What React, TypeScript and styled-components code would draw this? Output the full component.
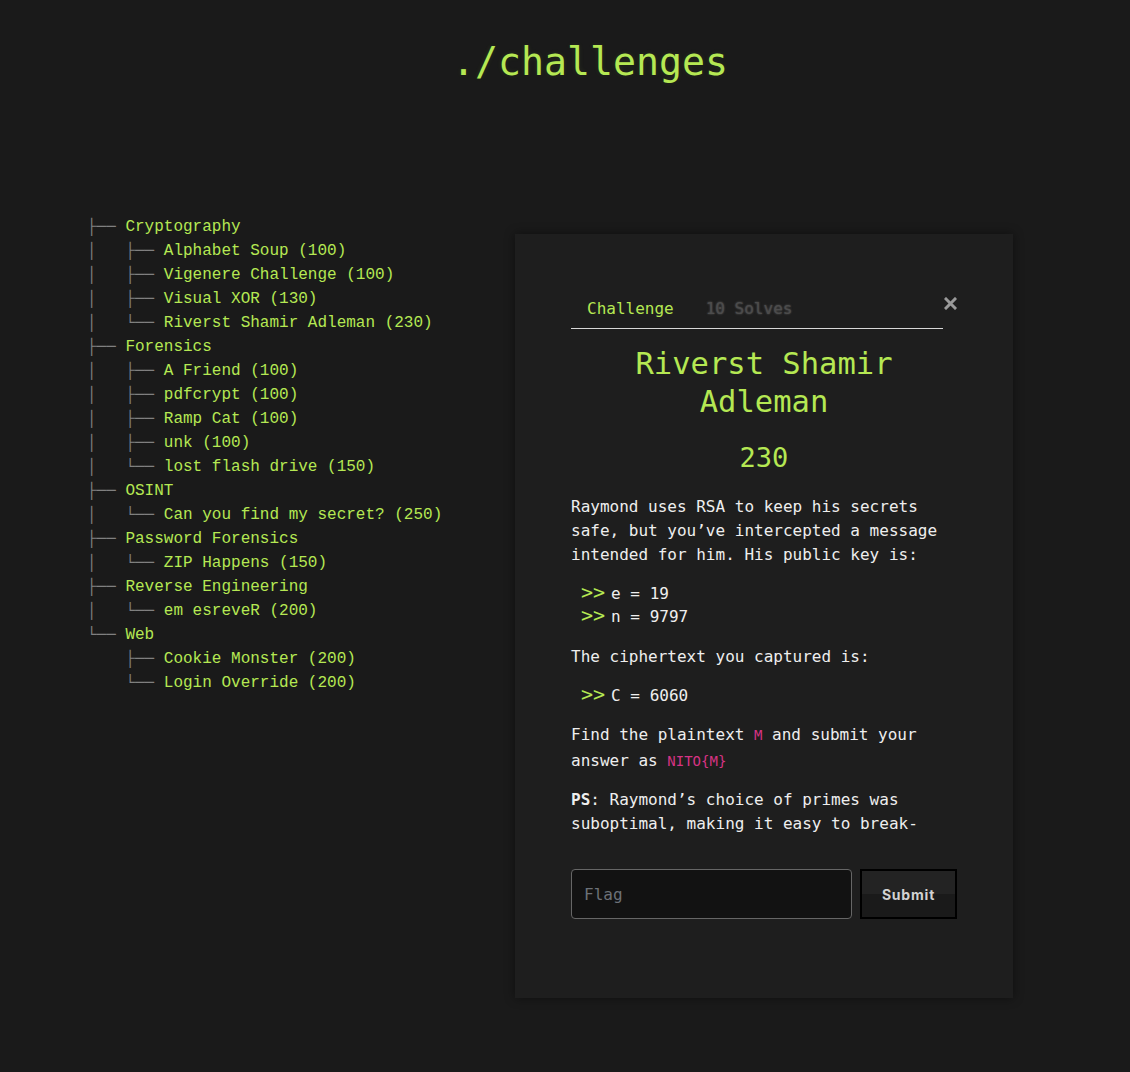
import React from "react";
import styled, { createGlobalStyle } from "styled-components";

const Global = createGlobalStyle`
  html, body { margin: 0; padding: 0; background: #1a1a1a; }
  body { font-family: "DejaVu Sans Mono", monospace; color: #eaeaea; }
`;

const Page = styled.div`
  min-height: 1072px;
  background: #1a1a1a;
`;

const Title = styled.h1`
  margin: 0;
  padding: 37px 0 0 50px;
  text-align: center;
  font-family: "DejaVu Sans Mono", monospace;
  font-weight: normal;
  font-size: 38.2px;
  line-height: 50px;
  color: #b5e853;
  text-shadow: 0 1px 1px rgba(0, 0, 0, 0.1), 0 0 5px rgba(181, 232, 83, 0.1);
`;

const Body = styled.div`
  display: flex;
  align-items: flex-start;
  padding: 128px 0 0 87px;
`;

const Tree = styled.div`
  width: 428px;
  font-family: "Liberation Mono", monospace;
  font-size: 16px;
  line-height: 24px;
  white-space: pre;
`;

const TreeLine = styled.div`
  display: flex;
`;

const Branch = styled.span`
  color: #808080;
`;

const Node = styled.span`
  color: #b5e853;
`;

const Panel = styled.div`
  margin-top: 19px;
  width: 498px;
  box-sizing: border-box;
  padding: 61px 56px 79px;
  background: #1e1e1e;
  box-shadow: 0 0 10px rgba(0, 0, 0, 0.45);
`;

const TabRow = styled.div`
  display: flex;
  align-items: flex-start;
`;

const Tabs = styled.div`
  flex: 1;
  display: flex;
  border-bottom: 1px solid #d8d8d8;
`;

const Tab = styled.div<{ $active?: boolean }>`
  padding: 2px 16px 7px;
  font-size: 16px;
  line-height: 24px;
  color: ${(p) => (p.$active ? "#b5e853" : "#4c4c4c")};
  text-shadow: ${(p) => (p.$active ? "none" : "0 0 2px rgba(110,110,110,0.8)")};
`;

const Close = styled.div`
  width: 14px;
  height: 14px;
  margin: 1px 0 0 0;
  display: flex;
  align-items: center;
  justify-content: center;
`;

const ChallengeName = styled.h2`
  margin: 16px 0 0;
  text-align: center;
  font-weight: normal;
  font-size: 30.5px;
  line-height: 38px;
  color: #b5e853;
`;

const Points = styled.div`
  margin-top: 20px;
  text-align: center;
  font-size: 27px;
  line-height: 34px;
  color: #b5e853;
`;

const Para = styled.p<{ $lh?: number; $mt?: number }>`
  margin: ${(p) => p.$mt ?? 16}px 0 0;
  font-size: 16px;
  line-height: ${(p) => p.$lh ?? 24}px;
  color: #eeeeee;
`;

const CodeBlock = styled.div<{ $mt?: number }>`
  margin-top: ${(p) => p.$mt ?? 15}px;
  padding-left: 10px;
  font-size: 16px;
  line-height: 23px;
  color: #eeeeee;
`;

const Prompt = styled.span`
  color: #b5e853;
  font-size: 20px;
  line-height: 0;
  margin-right: 6px;
`;

const Code = styled.code`
  font-family: "DejaVu Sans Mono", monospace;
  font-size: 14px;
  line-height: 0;
  color: #d63384;
`;

const Strong = styled.b`
  font-weight: bold;
`;

const Form = styled.div`
  display: flex;
  gap: 8px;
  margin-top: 33px;
`;

const Input = styled.input`
  width: 281px;
  height: 50px;
  box-sizing: border-box;
  padding: 0 12px;
  background: #121212;
  border: 1px solid #666;
  border-radius: 4px;
  color: #eee;
  font-family: "DejaVu Sans Mono", monospace;
  font-size: 16px;
  outline: none;
  &::placeholder { color: #6c7178; }
`;

const Button = styled.button`
  width: 97px;
  height: 50px;
  box-sizing: border-box;
  border: 2px solid #000;
  background: linear-gradient(#232323 50%, #1a1a1a 50%);
  color: #d2d2d2;
  font-family: Inter, "Liberation Sans", sans-serif;
  font-weight: 700;
  font-size: 14px;
  letter-spacing: 0.8px;
`;

type Item = [string, string];

const tree: Item[] = [
  ["├── ", "Cryptography"],
  ["│   ├── ", "Alphabet Soup (100)"],
  ["│   ├── ", "Vigenere Challenge (100)"],
  ["│   ├── ", "Visual XOR (130)"],
  ["│   └── ", "Riverst Shamir Adleman (230)"],
  ["├── ", "Forensics"],
  ["│   ├── ", "A Friend (100)"],
  ["│   ├── ", "pdfcrypt (100)"],
  ["│   ├── ", "Ramp Cat (100)"],
  ["│   ├── ", "unk (100)"],
  ["│   └── ", "lost flash drive (150)"],
  ["├── ", "OSINT"],
  ["│   └── ", "Can you find my secret? (250)"],
  ["├── ", "Password Forensics"],
  ["│   └── ", "ZIP Happens (150)"],
  ["├── ", "Reverse Engineering"],
  ["│   └── ", "em esreveR (200)"],
  ["└── ", "Web"],
  ["    ├── ", "Cookie Monster (200)"],
  ["    └── ", "Login Override (200)"],
];

export default function App() {
  return (
    <Page>
      <Global />
      <Title>./challenges</Title>
      <Body>
        <Tree>
          {tree.map(([b, n], i) => (
            <TreeLine key={i}>
              <Branch>{b}</Branch>
              <Node>{n}</Node>
            </TreeLine>
          ))}
        </Tree>
        <Panel>
          <TabRow>
            <Tabs>
              <Tab $active>Challenge</Tab>
              <Tab>10 Solves</Tab>
            </Tabs>
            <Close>
              <svg width="13" height="13" viewBox="0 0 13 13">
                <path d="M2 2 L11 11 M11 2 L2 11" stroke="#9a9a9a" strokeWidth="3" strokeLinecap="square" />
              </svg>
            </Close>
          </TabRow>
          <ChallengeName>
            Riverst Shamir
            <br />
            Adleman
          </ChallengeName>
          <Points>230</Points>
          <Para $mt={20}>
            Raymond uses RSA to keep his secrets safe, but you’ve intercepted a message intended for him. His public
            key is:
          </Para>
          <CodeBlock>
            <div>
              <Prompt>&gt;&gt;</Prompt>e = 19
            </div>
            <div>
              <Prompt>&gt;&gt;</Prompt>n = 9797
            </div>
          </CodeBlock>
          <Para $mt={17}>The ciphertext you captured is:</Para>
          <CodeBlock>
            <div>
              <Prompt>&gt;&gt;</Prompt>C = 6060
            </div>
          </CodeBlock>
          <Para $lh={26} $mt={15}>
            Find the plaintext <Code>M</Code> and submit your answer as <Code>NITO{"{M}"}</Code>
          </Para>
          <Para $mt={14}>
            <Strong>PS</Strong>: Raymond’s choice of primes was suboptimal, making it easy to break-
          </Para>
          <Form>
            <Input placeholder="Flag" />
            <Button>Submit</Button>
          </Form>
        </Panel>
      </Body>
    </Page>
  );
}
